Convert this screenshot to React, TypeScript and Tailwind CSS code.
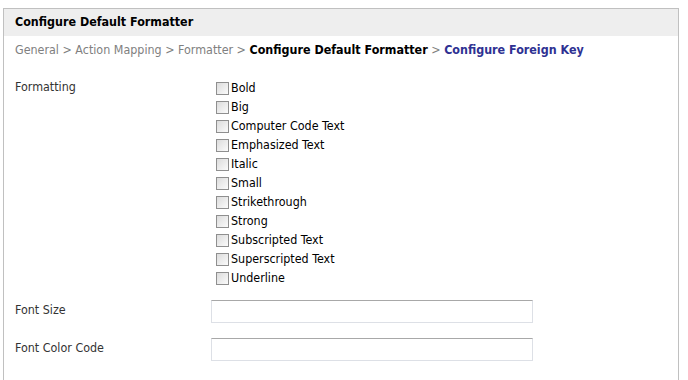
import React from 'react';

const options = [
  'Bold',
  'Big',
  'Computer Code Text',
  'Emphasized Text',
  'Italic',
  'Small',
  'Strikethrough',
  'Strong',
  'Subscripted Text',
  'Superscripted Text',
  'Underline',
];

const font = { fontFamily: '"DejaVu Sans Condensed", "DejaVu Sans", sans-serif' };

const Checkbox: React.FC<{ label: string }> = ({ label }) => (
  <label className="flex items-center h-[19px] text-[12.4px] text-black">
    <span className="w-[13px] h-[13px] border border-[#8f8f8f] bg-gradient-to-br from-[#dcdcdc] to-[#fbfbfb] mr-[2px]"></span>
    {label}
  </label>
);

const App: React.FC = () => {
  return (
    <div className="w-[688px] h-[380px] bg-white overflow-hidden pt-[8px] pl-[3px] pr-[9px]" style={font}>
      <div className="border-t border-l border-r border-[#c0c0c0] h-[400px]">
        <div className="h-[27px] bg-[#eeeeee] flex items-center px-[11px] text-[12.4px] font-bold text-black">
          Configure Default Formatter
        </div>
        <div className="px-[11px] pt-[5px] text-[12.4px] text-[#808080]">
          General &gt; Action Mapping &gt; Formatter &gt;{' '}
          <span className="font-bold text-black">Configure Default Formatter</span> &gt;{' '}
          <span className="font-bold text-[#2e3192]">Configure Foreign Key</span>
        </div>
        <div className="flex px-[11px] pt-[18px]">
          <div className="w-[201px] text-[12.4px] text-[#333]">Formatting</div>
          <div className="flex flex-col pt-[1px]">
            {options.map((o) => (
              <Checkbox key={o} label={o} />
            ))}
          </div>
        </div>
        <div className="flex items-center px-[11px] mt-[12px]">
          <div className="w-[196px] text-[12.4px] text-[#333] -mt-[1px]">Font Size</div>
          <input className="w-[322px] h-[23px] border border-[#dde0e6] border-t-[#a8a8a8] outline-none" />
        </div>
        <div className="flex items-center px-[11px] mt-[15px]">
          <div className="w-[196px] text-[12.4px] text-[#333] -mt-[1px]">Font Color Code</div>
          <input className="w-[322px] h-[23px] border border-[#dde0e6] border-t-[#a8a8a8] outline-none" />
        </div>
      </div>
    </div>
  );
};

export default App;
